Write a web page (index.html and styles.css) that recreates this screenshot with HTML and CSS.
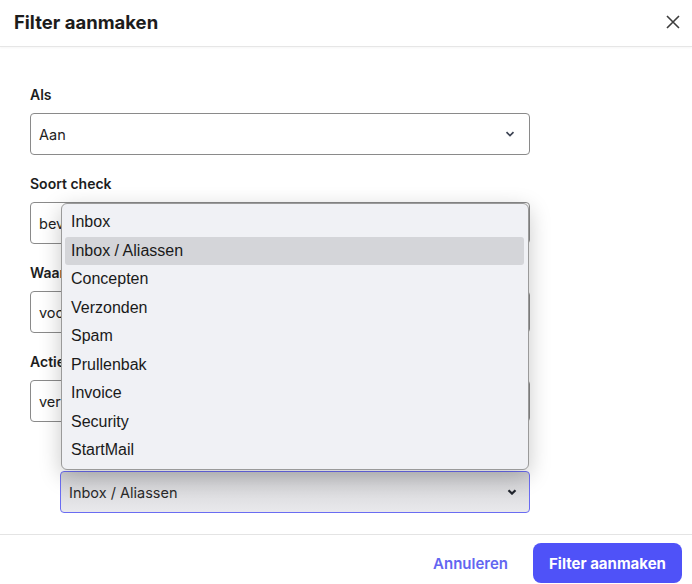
FILE: index.html
```html
<!DOCTYPE html>
<html lang="nl">
<head>
<meta charset="utf-8">
<title>Filter aanmaken</title>
<link rel="stylesheet" href="styles.css">
</head>
<body>
<div class="dialog">
  <header class="head">
    <h1 class="title">Filter aanmaken</h1>
    <button class="close" aria-label="Sluiten">
      <svg width="14" height="14" viewBox="0 0 14 14"><path d="M1 1L13 13M13 1L1 13" stroke="#3d3d3d" stroke-width="1.6" fill="none"/></svg>
    </button>
  </header>
  <main class="body">
    <div class="field">
      <div class="label">Als</div>
      <div class="select"><span>Aan</span><svg class="chev" width="10" height="6" viewBox="0 0 10 6"><path d="M1.5 1.2L5 4.6L8.5 1.2" stroke="#3b4252" stroke-width="1.7" fill="none"/></svg></div>
    </div>
    <div class="field">
      <div class="label">Soort check</div>
      <div class="select"><span>bevat</span><svg class="chev" width="10" height="6" viewBox="0 0 10 6"><path d="M1.5 1.2L5 4.6L8.5 1.2" stroke="#3b4252" stroke-width="1.7" fill="none"/></svg></div>
    </div>
    <div class="field">
      <div class="label">Waarde</div>
      <div class="select"><span>voorbeeld</span><svg class="chev" width="10" height="6" viewBox="0 0 10 6"><path d="M1.5 1.2L5 4.6L8.5 1.2" stroke="#3b4252" stroke-width="1.7" fill="none"/></svg></div>
    </div>
    <div class="field">
      <div class="label">Actie</div>
      <div class="select"><span>verplaatsen naar map</span><svg class="chev" width="10" height="6" viewBox="0 0 10 6"><path d="M1.5 1.2L5 4.6L8.5 1.2" stroke="#3b4252" stroke-width="1.7" fill="none"/></svg></div>
    </div>
    <div class="sub">
      <div class="select focus"><span>Inbox / Aliassen</span><svg class="chev" width="10" height="6" viewBox="0 0 10 6"><path d="M1.5 1.2L5 4.6L8.5 1.2" stroke="#22262e" stroke-width="2.2" fill="none"/></svg></div>
    </div>
    <ul class="menu">
      <li>Inbox</li>
      <li class="active">Inbox / Aliassen</li>
      <li>Concepten</li>
      <li>Verzonden</li>
      <li>Spam</li>
      <li>Prullenbak</li>
      <li>Invoice</li>
      <li>Security</li>
      <li>StartMail</li>
    </ul>
  </main>
  <footer class="foot">
    <button class="cancel">Annuleren</button>
    <button class="primary">Filter aanmaken</button>
  </footer>
</div>
</body>
</html>
```
FILE: styles.css
```css
* { box-sizing: border-box; }
html, body { margin: 0; padding: 0; background: #fff; }
body { font-family: Inter, "Noto Sans", sans-serif; color: #1e1e1e; }
.dialog { width: 692px; position: relative; }
.head {
  height: 47px;
  display: flex;
  align-items: center;
  justify-content: space-between;
  padding: 0 10px 0 14px;
  border-bottom: 1px solid #e6e6e6;
  box-shadow: 0 1px 2px rgba(0,0,0,0.04);
}
.title { margin: 0; font-size: 18.5px; font-weight: 700; letter-spacing: 0; color: #1c1c1c; line-height: 22px; padding-bottom: 2px; }
.close { border: 0; background: none; padding: 0; width: 18px; height: 18px; display: flex; align-items: center; justify-content: center; margin-top: -2px; }
.body { padding: 39px 0 0 30px; position: relative; height: 487px; }
.field { width: 500px; margin-bottom: 20px; }
.label { font-size: 14px; font-weight: 600; line-height: 18px; margin-bottom: 9px; color: #1d1d1d; }
.select {
  height: 42px;
  border: 1px solid #8a8a8a;
  border-radius: 4px;
  display: flex;
  align-items: center;
  justify-content: space-between;
  padding: 0 14px 0 8px;
  font-size: 14.5px;
  color: #222;
  background: #fff;
}
.sub { margin: 49px 0 0 30px; width: 470px; }
.select.focus {
  border-color: #6a6cf2;
  background: linear-gradient(#cfcfd2, #e9e9ec);
  color: #2a2a2a;
  padding-right: 12px;
}
.menu {
  position: absolute;
  left: 61px;
  top: 156px;
  width: 468px;
  margin: 0;
  padding: 4px 4px 4px 3px;
  list-style: none;
  background: #f0f1f5;
  border: 1px solid #9a9a9a;
  border-radius: 6px;
  box-shadow: 0 6px 22px rgba(0,0,0,0.22);
  font-family: "Liberation Sans", Arial, sans-serif;
  font-size: 16px;
  color: #1a1a1a;
  z-index: 5;
}
.menu li { height: 28.5px; line-height: 28.5px; padding-left: 6px; border-radius: 3px; }
.menu li.active { background: #d4d5d9; }
.foot {
  border-top: 1px solid #e4e4e4;
  display: flex;
  justify-content: flex-end;
  align-items: center;
  gap: 25px;
  padding: 7px 10px 0 0;
  height: 50px;
}
.cancel { border: 0; background: none; padding: 0; font-family: inherit; font-size: 15px; font-weight: 600; color: #6366f1; }
.primary {
  border: 0;
  background: #4f52f8;
  color: #fff;
  font-family: inherit;
  font-size: 15px;
  font-weight: 700;
  width: 149px;
  height: 40px;
  border-radius: 8px;
}
```
